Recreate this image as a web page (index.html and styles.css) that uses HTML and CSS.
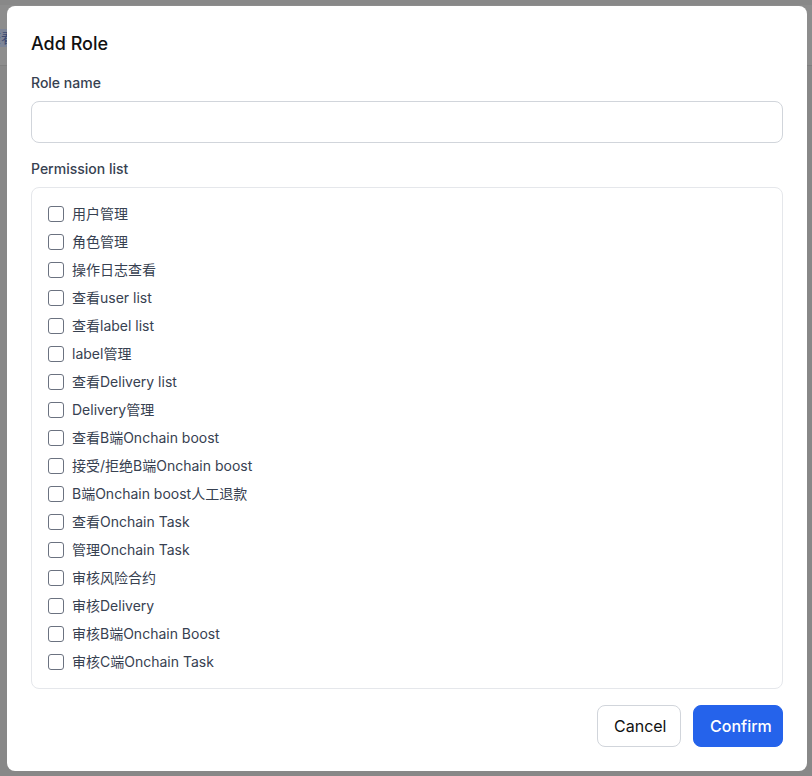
FILE: index.html
```html
<!DOCTYPE html>
<html lang="zh">
<head>
<meta charset="utf-8">
<title>Add Role</title>
<link rel="stylesheet" href="styles.css">
</head>
<body>
<div class="page">
  <div class="page-header">
    <span class="page-crumb">查看</span>
  </div>
</div>
<div class="overlay">
  <div class="modal">
    <h2 class="modal-title">Add Role</h2>
    <label class="field-label" for="role-name">Role name</label>
    <input id="role-name" class="text-input" type="text">
    <div class="field-label perm-label">Permission list</div>
    <div class="perm-box">
      <label class="perm-row"><span class="cb"></span><span>用户管理</span></label>
      <label class="perm-row"><span class="cb"></span><span>角色管理</span></label>
      <label class="perm-row"><span class="cb"></span><span>操作日志查看</span></label>
      <label class="perm-row"><span class="cb"></span><span>查看user list</span></label>
      <label class="perm-row"><span class="cb"></span><span>查看label list</span></label>
      <label class="perm-row"><span class="cb"></span><span>label管理</span></label>
      <label class="perm-row"><span class="cb"></span><span>查看Delivery list</span></label>
      <label class="perm-row"><span class="cb"></span><span>Delivery管理</span></label>
      <label class="perm-row"><span class="cb"></span><span>查看B端Onchain boost</span></label>
      <label class="perm-row"><span class="cb"></span><span>接受/拒绝B端Onchain boost</span></label>
      <label class="perm-row"><span class="cb"></span><span>B端Onchain boost人工退款</span></label>
      <label class="perm-row"><span class="cb"></span><span>查看Onchain Task</span></label>
      <label class="perm-row"><span class="cb"></span><span>管理Onchain Task</span></label>
      <label class="perm-row"><span class="cb"></span><span>审核风险合约</span></label>
      <label class="perm-row"><span class="cb"></span><span>审核Delivery</span></label>
      <label class="perm-row"><span class="cb"></span><span>审核B端Onchain Boost</span></label>
      <label class="perm-row"><span class="cb"></span><span>审核C端Onchain Task</span></label>
    </div>
    <div class="actions">
      <button class="btn btn-cancel" type="button">Cancel</button>
      <button class="btn btn-confirm" type="button">Confirm</button>
    </div>
  </div>
</div>
</body>
</html>
```

FILE: styles.css
```css
* { box-sizing: border-box; }
html, body { margin: 0; padding: 0; }
body {
  width: 812px;
  height: 776px;
  overflow: hidden;
  background: #888888;
  font-family: Inter, "Noto Sans CJK SC", "Noto Sans", sans-serif;
}
.page { height: 776px; }
.page-header {
  height: 66px;
  background: #8d8d8d;
  border-top: 5px solid #888888;
  border-bottom: 1px solid #7f7f7f;
  padding-top: 22px;
}
.page-crumb {
  display: inline-block;
  margin-left: -14px;
  padding: 0 1px;
  font-size: 14px;
  line-height: 18px;
  color: #3b4a72;
  background: #7d8597;
}
.overlay {
  position: fixed;
  inset: 0;
  display: flex;
  align-items: center;
  justify-content: center;
}
.modal {
  width: 800px;
  height: 765px;
  margin-left: 2px;
  background: #ffffff;
  border-radius: 8px;
  padding: 24px 24px 23px;
  display: flex;
  flex-direction: column;
}
.modal-title {
  margin: 0 0 15px;
  font-size: 18px;
  line-height: 28px;
  font-weight: 500;
  color: #111111;
}
.field-label {
  display: block;
  font-size: 14px;
  line-height: 20px;
  font-weight: 500;
  color: #374151;
  margin-bottom: 8px;
}
.text-input {
  display: block;
  width: 100%;
  height: 42px;
  border: 1px solid #d1d5db;
  border-radius: 8px;
  padding: 0 12px;
  font: inherit;
  font-size: 14px;
  outline: none;
  background: #fff;
}
.perm-label { margin-top: 16px; }
.perm-box {
  border: 1px solid #e5e7eb;
  border-radius: 8px;
  padding: 16px;
  display: flex;
  flex-direction: column;
  gap: 8px;
}
.perm-row {
  display: flex;
  align-items: center;
  gap: 8px;
  height: 20px;
  font-size: 14px;
  line-height: 20px;
  color: #374151;
}
.cb {
  width: 16px;
  height: 16px;
  border: 1px solid #6b7280;
  border-radius: 3px;
  background: #fff;
  flex: none;
}
.actions {
  margin-top: 16px;
  display: flex;
  justify-content: flex-end;
  gap: 12px;
}
.btn {
  height: 42px;
  border-radius: 8px;
  font-family: inherit;
  font-size: 16px;
  line-height: 20px;
  padding: 0 16px;
  cursor: pointer;
}
.btn-cancel {
  width: 84px;
  background: #ffffff;
  border: 1px solid #d1d5db;
  color: #111111;
}
.btn-confirm {
  width: 90px;
  background: #2563eb;
  border: 1px solid #2563eb;
  color: #ffffff;
  font-weight: 500;
}
```
